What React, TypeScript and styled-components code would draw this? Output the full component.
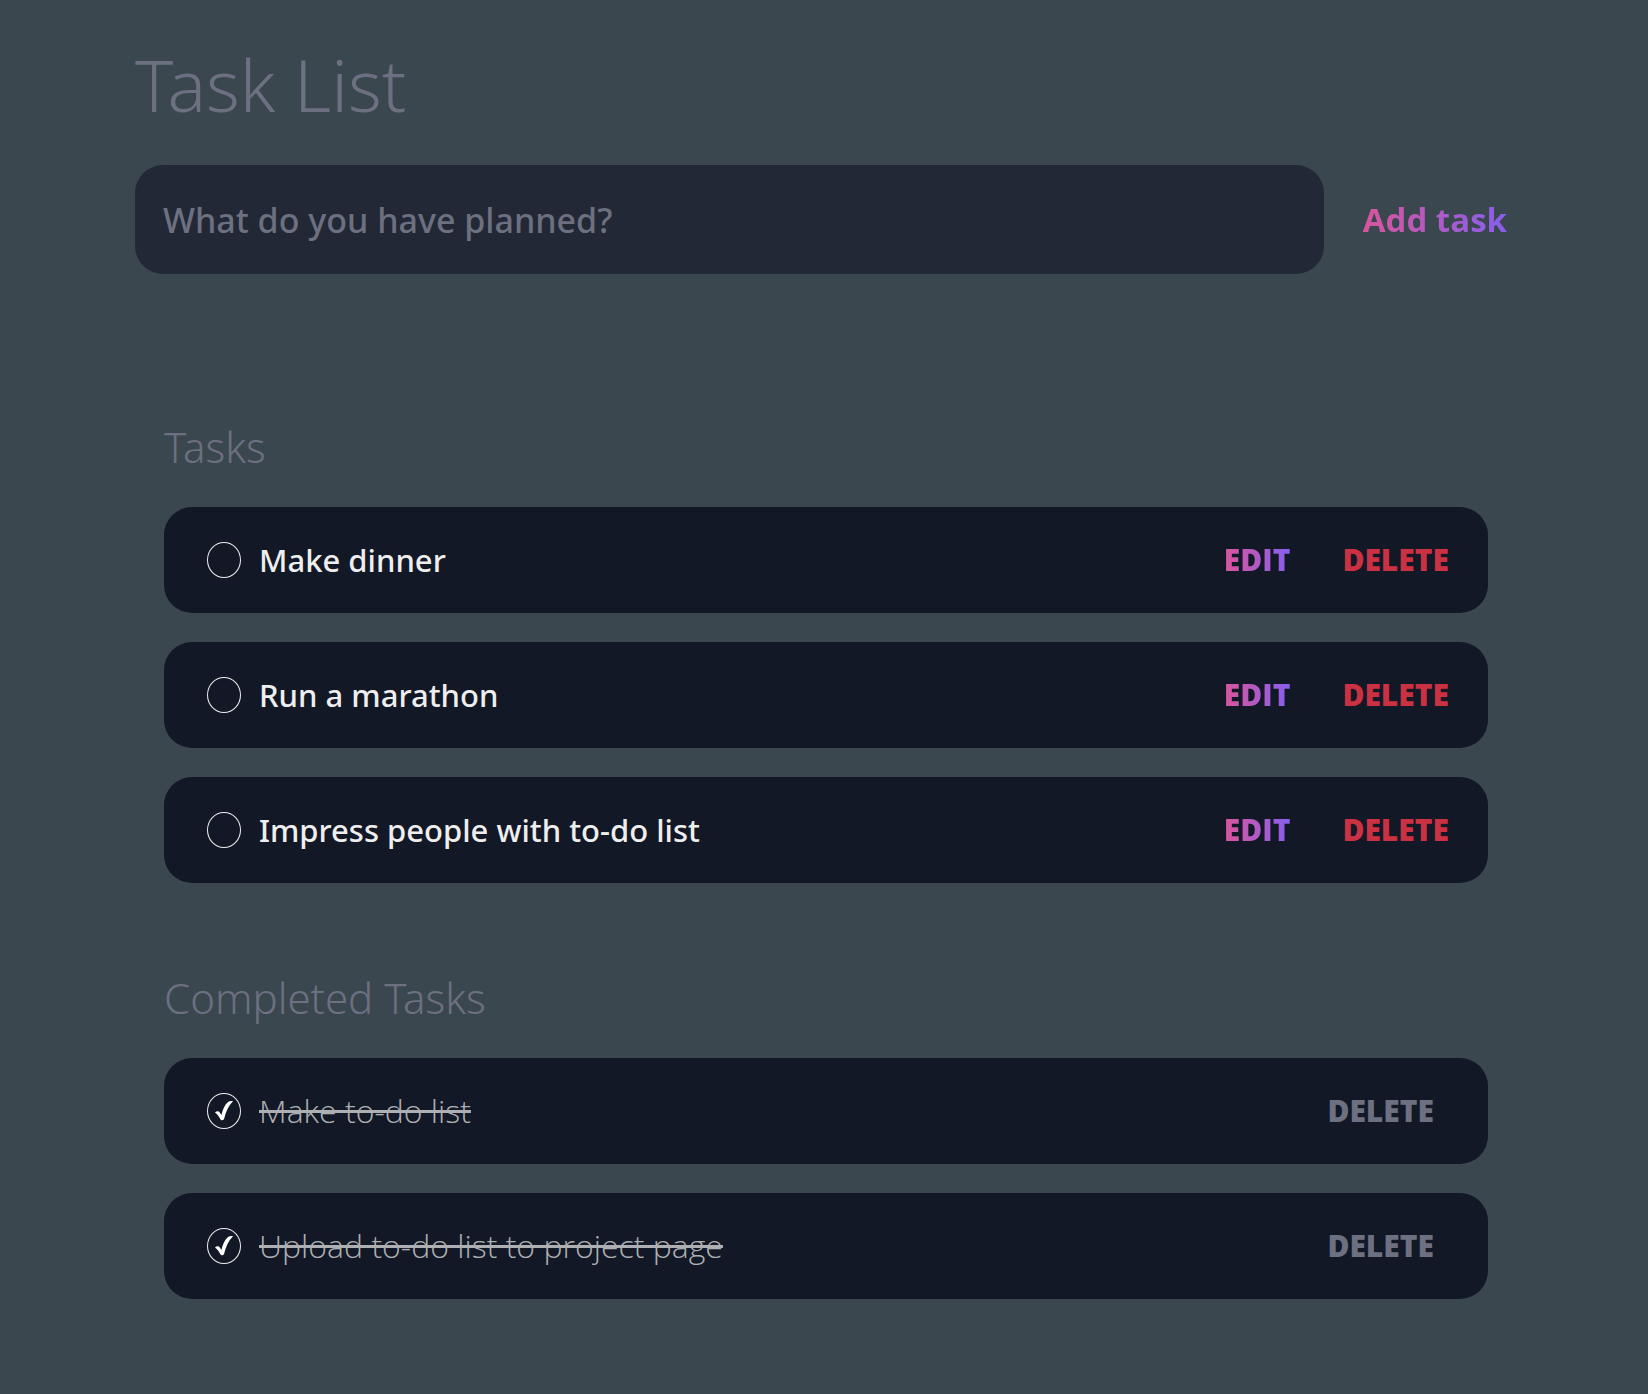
import React, { useState } from 'react';
import styled, { createGlobalStyle, css } from 'styled-components';

const colors = {
  background: '#3b474f',
  dark: '#222835',
  darkest: '#121826',
  grey: '#6c7080',
  light: '#eeeeee',
  pink: '#d9559c',
  purple: '#875fee',
  red: '#ca3142',
};

const GlobalStyle = createGlobalStyle`
  *, *::before, *::after { box-sizing: border-box; }
  body {
    margin: 0;
    min-height: 100vh;
    background: ${colors.background};
    color: ${colors.light};
    font-family: "Open Sans", "Noto Sans", sans-serif;
  }
  button, input { font-family: inherit; }
`;

const mediumText = css`
  font-family: "Noto Sans", "Open Sans", sans-serif;
  font-weight: 500;
`;

const headingText = css`
  color: ${colors.grey};
  font-family: "Noto Sans", "Open Sans", sans-serif;
  font-weight: 300;
`;

const Page = styled.div`
  padding: 40px 131px 84px 135px;
`;

const Title = styled.h1`
  margin: 0 0 37px;
  font-size: 72px;
  line-height: 88px;
  ${headingText}
`;

const NewTaskForm = styled.form`
  display: flex;
  align-items: center;
`;

const NewTaskInput = styled.input`
  flex: 1;
  min-width: 0;
  height: 109px;
  padding: 0 28px;
  border: 0;
  border-radius: 28px;
  background: ${colors.dark};
  color: ${colors.light};
  font-size: 34px;
  ${mediumText}

  &::placeholder {
    color: ${colors.grey};
    opacity: 1;
  }
`;

const gradientText = css`
  color: transparent;
  background: linear-gradient(to right, ${colors.pink}, ${colors.purple});
  background-clip: text;
  -webkit-background-clip: text;
`;

const AddButton = styled.button`
  margin: 0 10px 0 39px;
  padding: 0;
  border: 0;
  font-size: 33px;
  font-weight: 700;
  line-height: 48px;
  cursor: pointer;
  ${gradientText}
`;

const Lists = styled.main`
  display: grid;
  gap: 84px;
  padding: 142px 29px 0;
`;

const SectionTitle = styled.h2`
  margin: 0 0 29px;
  font-size: 42px;
  line-height: 62px;
  ${headingText}
`;

const TaskItems = styled.ul`
  display: grid;
  gap: 29px;
  margin: 0;
  padding: 0;
  list-style: none;
`;

const TaskRow = styled.li<{ $done: boolean }>`
  display: flex;
  align-items: center;
  gap: 52px;
  height: 106px;
  padding: 0 ${({ $done }) => ($done ? 54 : 39)}px 0 43px;
  border-radius: 28px;
  background: ${colors.darkest};
`;

const TaskLabel = styled.label<{ $done: boolean }>`
  display: flex;
  flex: 1;
  align-items: center;
  gap: 18px;
  min-width: 0;
  line-height: 44px;
  ${({ $done }) =>
    $done
      ? css`
          color: #aeafb3;
          font-size: 32px;
          font-weight: 300;
          text-decoration: line-through 3px;
        `
      : css`
          font-size: 31px;
          ${mediumText}
        `}
`;

const CheckFrame = styled.span`
  display: grid;
  flex: none;

  > * { grid-area: 1 / 1; }
`;

const CheckInput = styled.input`
  width: 34px;
  height: 36px;
  margin: 0;
  border: 1px solid ${colors.light};
  border-radius: 50%;
  appearance: none;
  cursor: pointer;
`;

const CheckMark = styled.svg`
  width: 34px;
  height: 36px;
  fill: #ffffff;
  pointer-events: none;
`;

const ActionButton = styled.button<{ $tone: 'edit' | 'delete' | 'muted' }>`
  padding: 0;
  border: 0;
  background: none;
  font-size: 30px;
  font-weight: 800;
  line-height: 44px;
  text-transform: uppercase;
  cursor: pointer;
  ${({ $tone }) =>
    $tone === 'edit'
      ? gradientText
      : css`color: ${$tone === 'delete' ? colors.red : colors.grey};`}
`;

type Task = { id: number; text: string; done: boolean };

const initialTasks: Task[] = [
  { id: 1, text: 'Make dinner', done: false },
  { id: 2, text: 'Run a marathon', done: false },
  { id: 3, text: 'Impress people with to-do list', done: false },
  { id: 4, text: 'Make to-do list', done: true },
  { id: 5, text: 'Upload to-do list to project page', done: true },
];

type ListProps = {
  title: string;
  tasks: Task[];
  onToggle: (id: number) => void;
  onEdit: (task: Task) => void;
  onDelete: (id: number) => void;
};

function TaskSection({ title, tasks, onToggle, onEdit, onDelete }: ListProps) {
  return (
    <section>
      <SectionTitle>{title}</SectionTitle>
      <TaskItems>
        {tasks.map((task) => (
          <TaskRow key={task.id} $done={task.done}>
            <TaskLabel $done={task.done}>
              <CheckFrame>
                <CheckInput type="checkbox" checked={task.done} onChange={() => onToggle(task.id)} />
                {task.done && (
                  <CheckMark viewBox="0 0 34 36" aria-hidden="true">
                    <path d="M8 19.4C9.6 17.8 11.8 17.8 12.8 19.4L14.4 22C15.8 16 18 11.4 20.8 9.2C22.2 8.1 24 7.8 26 8.2C21.2 13 18.8 19 17.2 25.6C16.8 27.6 14.2 28 13.2 26C12 23.2 10.6 21.2 8 19.4Z" />
                  </CheckMark>
                )}
              </CheckFrame>
              <span>{task.text}</span>
            </TaskLabel>
            {!task.done && (
              <ActionButton type="button" $tone="edit" onClick={() => onEdit(task)}>Edit</ActionButton>
            )}
            <ActionButton type="button" $tone={task.done ? 'muted' : 'delete'} onClick={() => onDelete(task.id)}>
              Delete
            </ActionButton>
          </TaskRow>
        ))}
      </TaskItems>
    </section>
  );
}

export default function App() {
  const [tasks, setTasks] = useState(initialTasks);
  const [draft, setDraft] = useState('');

  const addTask = (event: React.FormEvent) => {
    event.preventDefault();
    if (!draft.trim()) return;
    setTasks([...tasks, { id: Date.now(), text: draft.trim(), done: false }]);
    setDraft('');
  };
  const handlers = {
    onToggle: (id: number) => setTasks(tasks.map((t) => (t.id === id ? { ...t, done: !t.done } : t))),
    onEdit: (task: Task) => {
      setDraft(task.text);
      setTasks(tasks.filter((t) => t.id !== task.id));
    },
    onDelete: (id: number) => setTasks(tasks.filter((t) => t.id !== id)),
  };

  return (
    <>
      <GlobalStyle />
      <Page>
        <header>
          <Title>Task List</Title>
          <NewTaskForm onSubmit={addTask}>
            <NewTaskInput
              type="text"
              aria-label="New task"
              placeholder="What do you have planned?"
              value={draft}
              onChange={(event) => setDraft(event.target.value)}
            />
            <AddButton type="submit">Add task</AddButton>
          </NewTaskForm>
        </header>
        <Lists>
          <TaskSection title="Tasks" tasks={tasks.filter((t) => !t.done)} {...handlers} />
          <TaskSection title="Completed Tasks" tasks={tasks.filter((t) => t.done)} {...handlers} />
        </Lists>
      </Page>
    </>
  );
}
